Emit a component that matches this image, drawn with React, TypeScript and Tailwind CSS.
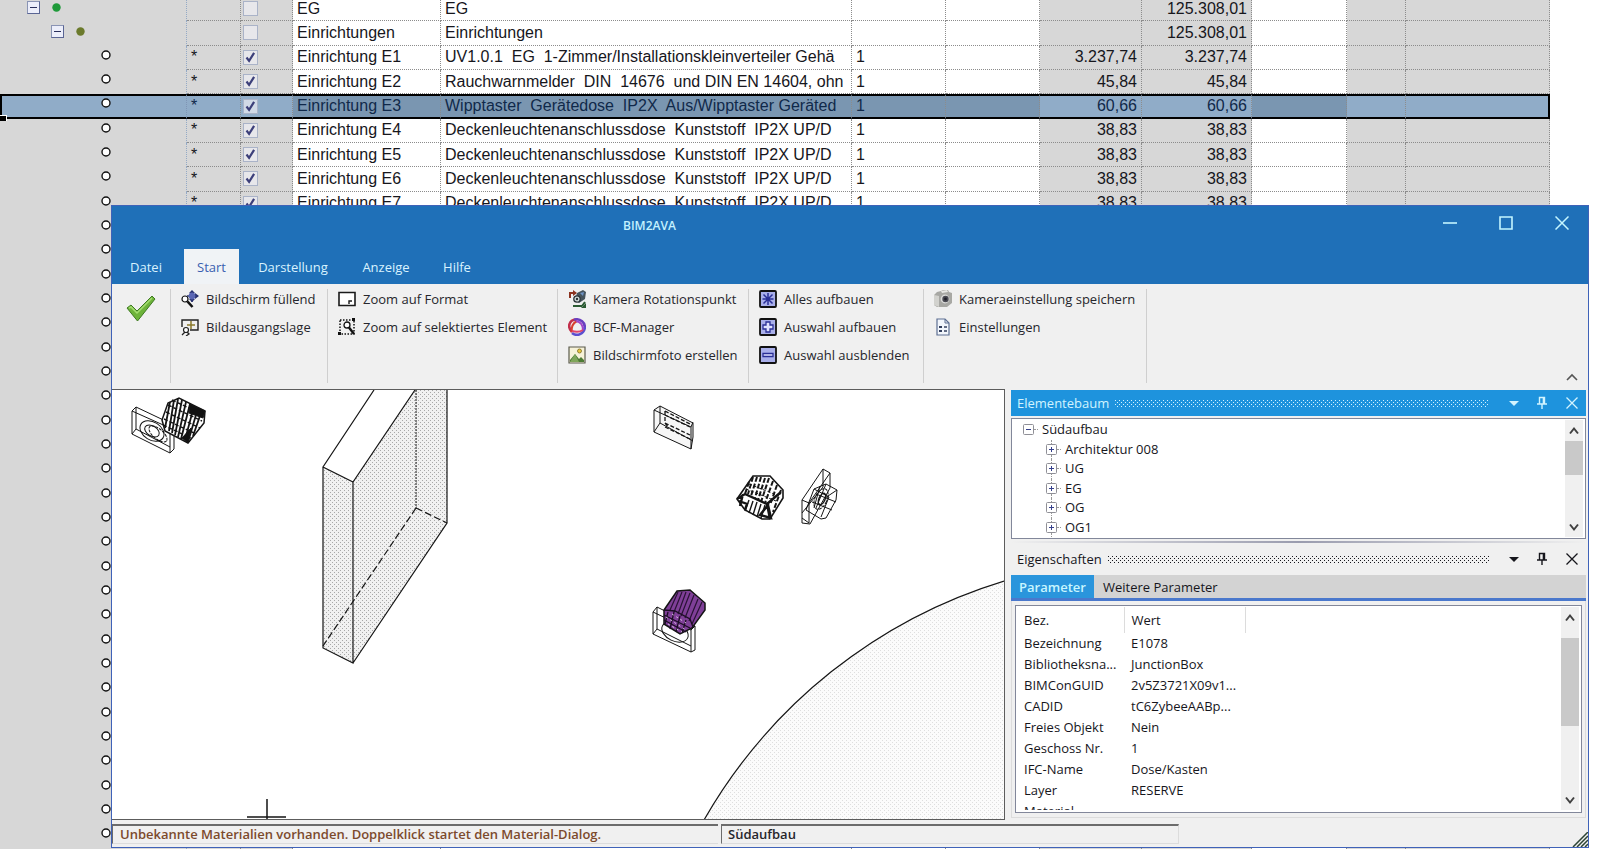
import React from 'react';

type SheetRow = {
  level?: number;
  dot?: string;
  checked?: boolean;
  name: string;
  text: string;
  qty?: string;
  price?: string;
  total?: string;
  selected?: boolean;
};

const DOSE = 'Deckenleuchtenanschlussdose  Kunststoff  IP2X UP/D';

const sheetRows: SheetRow[] = [
  { level: 1, dot: '#1f9a3a', name: 'EG', text: 'EG', total: '125.308,01' },
  {
    level: 2,
    dot: '#6b7a2c',
    name: 'Einrichtungen',
    text: 'Einrichtungen',
    total: '125.308,01',
  },
  {
    checked: true,
    name: 'Einrichtung E1',
    text: 'UV1.0.1  EG  1-Zimmer/Installationskleinverteiler Gehä',
    qty: '1',
    price: '3.237,74',
    total: '3.237,74',
  },
  {
    checked: true,
    name: 'Einrichtung E2',
    text: 'Rauchwarnmelder  DIN  14676  und DIN EN 14604, ohn',
    qty: '1',
    price: '45,84',
    total: '45,84',
  },
  {
    checked: true,
    selected: true,
    name: 'Einrichtung E3',
    text: 'Wipptaster  Gerätedose  IP2X  Aus/Wipptaster Geräted',
    qty: '1',
    price: '60,66',
    total: '60,66',
  },
  ...['E4', 'E5', 'E6', 'E7'].map((id) => ({
    checked: true,
    name: `Einrichtung ${id}`,
    text: DOSE,
    qty: '1',
    price: '38,83',
    total: '38,83',
  })),
];

const hiddenRows = Array.from({ length: 26 }, (_, i) => i);

function TreeCell({ row }: { row?: SheetRow }) {
  if (row?.level) {
    return (
      <div
        className={
          row.level === 1
            ? 'flex items-center gap-3 pl-[27px]'
            : 'flex items-center gap-3 pl-[51px]'
        }
      >
        <button
          aria-label="Zuklappen"
          className="flex h-[13px] w-[13px] items-center justify-center border border-[#8a94b4] border-r-[#5a6594] border-b-[#5a6594] bg-[#eceefa]"
        >
          <span className="h-px w-[7px] bg-[#2a2f5c]" />
        </button>
        <svg className="h-[9px] w-[9px]" viewBox="0 0 9 9">
          <circle cx="4.5" cy="4.5" r="4.2" fill={row.dot} />
        </svg>
      </div>
    );
  }
  return (
    <svg
      className={
        row?.selected
          ? 'ml-[99px] h-[10px] w-[10px]'
          : 'ml-[101px] h-[10px] w-[10px]'
      }
      viewBox="0 0 10 10"
    >
      <circle cx="5" cy="5" r="4" fill="#fff" stroke="#111" strokeWidth="1.4" />
    </svg>
  );
}

function CheckCell({ row }: { row: SheetRow }) {
  return (
    <label className="ml-[2px] grid h-[15px] w-[15px]">
      <input
        type="checkbox"
        aria-label={row.name}
        defaultChecked={row.checked}
        className="col-start-1 row-start-1 h-[15px] w-[15px] appearance-none border border-[#aab3c8] bg-[#eeeef4]/70"
      />
      {row.checked && (
        <svg
          className="pointer-events-none col-start-1 row-start-1"
          viewBox="0 0 15 15"
          fill="none"
        >
          <path d="M3.5 7.5l2.6 3.4 5-8" stroke="#3c3f7a" strokeWidth="2.2" />
        </svg>
      )}
    </label>
  );
}

function Sheet() {
  const line = 'border-r border-dotted border-[#8c8c8c] p-0 ';
  return (
    <div className="h-full overflow-hidden">
      <table className="-mt-[3px] h-full w-full table-fixed border-separate border-spacing-0 font-['Liberation_Sans',Arial,sans-serif] text-base leading-5 text-[#16161c]">
        <colgroup>
          <col className="w-[187px]" />
          <col className="w-[54px]" />
          <col className="w-[52px]" />
          <col className="w-[148px]" />
          <col className="w-[411px]" />
          <col className="w-[94px]" />
          <col className="w-[94px]" />
          <col className="w-[102px]" />
          <col className="w-[110px]" />
          <col className="w-[95px]" />
          <col className="w-[59px]" />
          <col className="w-[144px]" />
          <col />
        </colgroup>
        <tbody>
          {sheetRows.map((row) => {
            const edge = row.selected
              ? 'border-y-2 [border-top-style:solid] [border-bottom-style:solid] border-t-black border-b-black text-[#10294a] '
              : 'border-b ';
            const grey = row.selected ? 'bg-[#90acc8] ' : 'bg-[#d7d7d7] ';
            const white = row.selected ? 'bg-[#7a96b1] ' : 'bg-white ';
            return (
              <tr key={row.name} className="h-6">
                <td
                  className={
                    row.selected
                      ? 'relative border-2 border-r border-black border-r-[#7f95b5] bg-[#90acc8] p-0 pt-[2px] align-top [border-right-style:dotted]'
                      : 'border-r border-dotted border-[#93a9c6] bg-[#d7d7d7] p-0 pt-1 align-top'
                  }
                >
                  <TreeCell row={row} />
                  {row.selected && (
                    <span className="absolute -bottom-1 -left-[2px] h-[6px] w-[7px] border-t border-r border-white bg-black" />
                  )}
                </td>
                <td className={line + edge + grey + 'pl-1'}>{row.qty && '*'}</td>
                <td className={line + edge + grey}>
                  <CheckCell row={row} />
                </td>
                <td className={line + edge + white + 'pl-1'}>{row.name}</td>
                <td
                  className={
                    line + edge + white + 'overflow-hidden pl-1 whitespace-pre'
                  }
                >
                  {row.text}
                </td>
                <td className={line + edge + white + 'pl-1'}>{row.qty}</td>
                <td className={line + edge + white} />
                <td className={line + edge + grey + 'pr-1 text-right'}>
                  {row.price}
                </td>
                <td className={line + edge + grey + 'pr-1 text-right'}>
                  {row.total}
                </td>
                <td className={line + edge + white} />
                <td className={line + edge + grey} />
                <td
                  className={
                    line +
                    edge +
                    grey +
                    (row.selected
                      ? 'border-r-2 border-r-black [border-right-style:solid]'
                      : '')
                  }
                />
                <td className="bg-white p-0" />
              </tr>
            );
          })}
          {hiddenRows.map((i) => (
            <tr key={i} className="h-6">
              <td className="border-r border-dotted border-[#93a9c6] bg-[#d7d7d7] p-0 pt-1 align-top">
                <TreeCell />
              </td>
              <td className={line + 'bg-[#d7d7d7]'} />
              <td className={line + 'bg-[#d7d7d7]'} />
              <td className={line + 'bg-white'} />
              <td className={line + 'bg-white'} />
              <td className={line + 'bg-white'} />
              <td className={line + 'bg-white'} />
              <td className={line + 'bg-[#d7d7d7]'} />
              <td className={line + 'bg-[#d7d7d7]'} />
              <td className={line + 'bg-white'} />
              <td className={line + 'bg-[#d7d7d7]'} />
              <td className={line + 'bg-[#d7d7d7]'} />
              <td className="bg-white p-0" />
            </tr>
          ))}
        </tbody>
      </table>
    </div>
  );
}

function TitleBar() {
  const tab = 'h-[35px] text-[13px] leading-4 font-medium text-[#d9f3ff] ';
  return (
    <header className="bg-[#1f70b8]">
      <div className="flex h-[43px] items-start">
        <h1 className="flex-1 pt-3 pl-[511px] text-xs leading-4 font-semibold text-[#c4f2ff]">
          BIM2AVA
        </h1>
        <div className="flex gap-[42px] pt-[10px] pr-[19px]">
          <button aria-label="Minimieren">
            <svg className="h-[14px] w-[14px]" viewBox="0 0 14 14">
              <path d="M0 7h14" stroke="#c4f6ff" strokeWidth="1.6" />
            </svg>
          </button>
          <button aria-label="Maximieren">
            <svg className="h-[14px] w-[14px]" viewBox="0 0 14 14" fill="none">
              <path d="M1 1h12v12H1z" stroke="#c4f6ff" strokeWidth="1.6" />
            </svg>
          </button>
          <button aria-label="Schließen">
            <svg className="h-[14px] w-[14px]" viewBox="0 0 14 14">
              <path
                d="M.5.5l13 13M13.5.5l-13 13"
                stroke="#c4f6ff"
                strokeWidth="1.5"
              />
            </svg>
          </button>
        </div>
      </div>
      <nav className="flex">
        <button className={tab + 'w-[72px] pr-1'}>Datei</button>
        <button className="h-[35px] w-[55px] bg-[#f0f3f6] text-[13px] leading-4 font-medium text-[#3a5fb0]">
          Start
        </button>
        <button className={tab + 'w-[108px]'}>Darstellung</button>
        <button className={tab + 'w-[78px]'}>Anzeige</button>
        <button className={tab + 'w-[64px]'}>Hilfe</button>
      </nav>
    </header>
  );
}

const icons = {
  fit: (
    <g fill="none">
      <path d="M11 1v11M6 6h11" stroke="#27306e" strokeWidth="1.6" />
      <path d="M8 3l3-3 3 3zM14 3l4 3-4 3zM8 9l3 3 3-3z" fill="#27306e" />
      <circle cx="11" cy="6" r="3.4" fill="#5a66b4" />
      <circle cx="4" cy="9" r="3" fill="#fff" stroke="#111" strokeWidth="1.2" />
      <path d="M6.5 11.5l5 5.500" stroke="#111" strokeWidth="2.6" />
    </g>
  ),
  home: (
    <g fill="none">
      <path d="M1 9V2h16v10H9" stroke="#222" strokeWidth="1.4" />
      <path d="M10 3v8M6 7h8" stroke="#8a7a2c" strokeWidth="1.5" />
      <circle cx="5" cy="12" r="2.5" fill="#fff" stroke="#222" strokeWidth="1.2" />
      <path d="M1 17l3-3M6 14l2 2-3 2" stroke="#222" strokeWidth="1.3" />
    </g>
  ),
  format: (
    <g fill="none">
      <path d="M1 2.5h16v13H1z" fill="#fff" stroke="#1a1a1a" strokeWidth="1.6" />
      <path d="M11 14v-3h3" stroke="#1a1a1a" strokeWidth="1.4" />
    </g>
  ),
  selection: (
    <g fill="none">
      <path
        d="M2 2h14v14H2z"
        stroke="#111"
        strokeWidth="1.5"
        strokeDasharray="1.5 1.5"
      />
      <path d="M0 14h3v3H0zM14 0h3v3h-3z" fill="#111" />
      <circle cx="9" cy="7" r="3" fill="#fff" stroke="#111" strokeWidth="1.3" />
      <path d="M11 9.5l5 6.5" stroke="#111" strokeWidth="2.4" />
    </g>
  ),
  rotate: (
    <g fill="none">
      <path d="M2 8V3h4" stroke="#8c3320" strokeWidth="2" />
      <path d="M5 0l4 3-4 3z" fill="#8c3320" />
      <path d="M9 3l6-3 3 2-1 7-6 4-4-3z" fill="#46545c" />
      <path d="M12 3l4-1-1 4z" fill="#6f93c4" />
      <circle
        cx="9"
        cy="9"
        r="3.2"
        fill="#cfdad8"
        stroke="#2c3438"
        strokeWidth="1.3"
      />
      <circle cx="9" cy="9" r="1.2" fill="#2c3438" />
      <path d="M5 16h9M14 16l3-4" stroke="#2b5b33" strokeWidth="2" />
      <path d="M13 18h5v-5z" fill="#2b5b33" />
    </g>
  ),
  bcf: (
    <g fill="none" strokeWidth="2.6">
      <path d="M4 14C-1 9 1 2 8 1.500" stroke="#c22f4c" />
      <path d="M6 1.800c6-2 12 3 10.500 9" stroke="#6a3fc0" />
      <path d="M17 9c-1 7-8 10-13 6" stroke="#5b4fd0" />
      <path d="M4 14c-1-6 1-9 5-11" stroke="#d8402f" strokeWidth="2" />
      <path d="M8 3c5 1 7 4 7 9" stroke="#a046c8" strokeWidth="2" />
      <path d="M4 13c4 1 8 1 11-1" stroke="#e0456c" strokeWidth="2" />
    </g>
  ),
  photo: (
    <g fill="none">
      <path d="M1 1h16v16H1z" fill="#f6f2d8" stroke="#5b5b4c" strokeWidth="1.2" />
      <path d="M2 14l5-6 4 5 2-2 3 3v2H2z" fill="#4c7a34" />
      <path d="M7 8l4 8H2z" fill="#7fa65a" />
      <circle
        cx="11.5"
        cy="5"
        r="2"
        fill="#e8c93c"
        stroke="#7c6b22"
        strokeWidth=".8"
      />
    </g>
  ),
  all: (
    <g fill="none">
      <rect
        x="1"
        y="1"
        width="16"
        height="16"
        rx="1"
        fill="#a9afea"
        stroke="#111"
        strokeWidth="1.8"
      />
      <path
        d="M9 3v12M3.500 9h11M4.500 4.500l9 9M13.500 4.500l-9 9"
        stroke="#2a2f96"
        strokeWidth="1.5"
      />
    </g>
  ),
  plus: (
    <g fill="none">
      <rect
        x="1"
        y="1"
        width="16"
        height="16"
        rx="1"
        fill="#a9afea"
        stroke="#111"
        strokeWidth="1.8"
      />
      <path
        d="M7 4h4v3h3v4h-3v3H7v-3H4V7h3z"
        fill="#dfe2ff"
        stroke="#2a2f96"
        strokeWidth="1.3"
      />
    </g>
  ),
  minus: (
    <g fill="none">
      <rect
        x="1"
        y="1"
        width="16"
        height="16"
        rx="1"
        fill="#a9afea"
        stroke="#111"
        strokeWidth="1.8"
      />
      <path
        d="M4 7.500h10v3H4z"
        fill="#dfe2ff"
        stroke="#2a2f96"
        strokeWidth="1.3"
      />
    </g>
  ),
  camera: (
    <g>
      <path d="M0 5l3-3 4-1 2-1 5 0 1 2 3 1v10l-5 4-10 0-3-2z" fill="#a8a8a4" />
      <path d="M0 5l5 1v11l-5-2z" fill="#d2d2ce" />
      <path d="M7 1l6-1 1 2-6 1z" fill="#e8e8e4" />
      <circle cx="11" cy="9" r="4.4" fill="#dcdcda" />
      <circle cx="11.5" cy="9" r="3.2" fill="#4a4a52" />
      <circle cx="11.5" cy="9" r="1.4" fill="#20202a" />
    </g>
  ),
  settings: (
    <g fill="none">
      <path d="M3 1h8l4 4v12H3z" fill="#f2f6fc" stroke="#5d6f92" strokeWidth="1.2" />
      <path d="M11 1v4h4" stroke="#5d6f92" />
      <path d="M5 8h3v2H5zM5 12h3v2H5z" fill="#34405e" />
      <path d="M10 9h3M10 13h3" stroke="#34405e" strokeWidth="1.6" />
    </g>
  ),
};

type RibbonItem = { icon: keyof typeof icons; label: string };

const ribbonGroups: { width: string; items: RibbonItem[] }[] = [
  {
    width: 'w-[157px]',
    items: [
      { icon: 'fit', label: 'Bildschirm füllend' },
      { icon: 'home', label: 'Bildausgangslage' },
    ],
  },
  {
    width: 'w-[230px]',
    items: [
      { icon: 'format', label: 'Zoom auf Format' },
      { icon: 'selection', label: 'Zoom auf selektiertes Element' },
    ],
  },
  {
    width: 'w-[191px]',
    items: [
      { icon: 'rotate', label: 'Kamera Rotationspunkt' },
      { icon: 'bcf', label: 'BCF-Manager' },
      { icon: 'photo', label: 'Bildschirmfoto erstellen' },
    ],
  },
  {
    width: 'w-[175px]',
    items: [
      { icon: 'all', label: 'Alles aufbauen' },
      { icon: 'plus', label: 'Auswahl aufbauen' },
      { icon: 'minus', label: 'Auswahl ausblenden' },
    ],
  },
  {
    width: 'w-[223px]',
    items: [
      { icon: 'camera', label: 'Kameraeinstellung speichern' },
      { icon: 'settings', label: 'Einstellungen' },
    ],
  },
];

function Ribbon() {
  return (
    <div className="flex h-[105px] shrink-0 bg-[#f0f0f0] pt-[5px] pb-[6px]">
      <div className="w-[59px] border-r border-[#cfcfcf] pt-[6px] pl-[14px]">
        <button aria-label="Übernehmen">
          <svg className="h-7 w-[30px]" viewBox="0 0 30 28">
            <path
              d="M1 13l4-3 6 6L26 1l3 3-17.500 22z"
              fill="#6db33a"
              stroke="#3e7a22"
              strokeWidth="1"
            />
            <path
              d="M3 13l2-1 6 6L26 3"
              fill="none"
              stroke="#a4dc70"
              strokeWidth="1.5"
            />
          </svg>
        </button>
      </div>
      {ribbonGroups.map((group, i) => (
        <div
          key={i}
          className={
            group.width + ' flex flex-col gap-2 border-r border-[#cfcfcf] pl-[10px]'
          }
        >
          {group.items.map((item) => (
            <button
              key={item.label}
              className="flex h-5 items-center gap-[7px] text-[13px] leading-5 font-medium whitespace-nowrap text-[#26262c]"
            >
              <svg className="h-[18px] w-[18px] shrink-0" viewBox="0 0 18 18">
                {icons[item.icon]}
              </svg>
              {item.label}
            </button>
          ))}
        </div>
      ))}
      <button aria-label="Menüband einklappen" className="mt-auto mr-[10px] ml-auto">
        <svg className="h-[11px] w-3" viewBox="0 0 12 11" fill="none">
          <path d="M1 8l5-5 5 5" stroke="#555" strokeWidth="1.6" />
        </svg>
      </button>
    </div>
  );
}

function Viewport() {
  return (
    <div className="min-w-0 flex-1 border-t border-r border-b border-[#5c5c5c] bg-white">
      <svg className="h-full w-full" fill="none" stroke="#151515">
        <defs>
          <pattern id="dots" width="4" height="4" patternUnits="userSpaceOnUse">
            <path d="M0 0h1v1H0zM2 2h1v1H2z" fill="#a8a8a8" stroke="none" />
          </pattern>
          <pattern id="fine" width="4" height="4" patternUnits="userSpaceOnUse">
            <path d="M0 0h1v1H0zM2 2h1v1H2z" fill="#dedede" stroke="none" />
          </pattern>
        </defs>

        {/* wall slab */}
        <path
          d="M211 77l30 15L303 0h32v133L241 273l-30-15z"
          fill="#f1f1f1"
          stroke="none"
        />
        <path
          d="M211 77l30 15L303 0h32v133L241 273l-30-15z"
          fill="url(#dots)"
          stroke="none"
        />
        <path
          d="M262 0L211 77l30 15L303 0M211 77v181l30 15V92M335 0v133L241 273"
          strokeWidth="1.2"
        />
        <path d="M304 0v118" strokeDasharray="2 1" />
        <path
          d="M304 118l31 15M304 118l-93 138"
          strokeWidth="1.2"
          strokeDasharray="7 3"
        />

        {/* round slab */}
        <path
          d="M592 430A520 520 0 0 1 892 191V430z"
          fill="#fbfbfb"
          stroke="none"
        />
        <path
          d="M592 430A520 520 0 0 1 892 191V430z"
          fill="url(#fine)"
          stroke="none"
        />
        <path d="M592 430A520 520 0 0 1 892 191" strokeWidth="1.2" />

        {/* socket, top left */}
        <g>
          <path d="M20 21l4-4 38 18v24l-4 4-38-19zM20 21l38 17v25M58 38l4-3M24 17v22l34 18M24 39l-4 5" />
          <ellipse cx="40" cy="41" rx="13" ry="9" transform="rotate(32 40 41)" />
          <ellipse cx="40" cy="41" rx="8" ry="5" transform="rotate(32 40 41)" />
          <ellipse
            cx="46"
            cy="44"
            rx="11"
            ry="5"
            transform="rotate(40 46 44)"
            strokeDasharray="3 1"
          />
          <path
            d="M50 30l6-17 11-5 26 13-1 12-16 20-23-12z"
            fill="#fff"
            strokeWidth="1.5"
          />
          <path
            d="M58 12l-5 26M62 10l-5 31M66 9l-6 34M70 10l-7 35M74 12l-8 35M78 14l-9 35M82 16l-9 34M86 18l-10 34M90 20l-9 26"
            strokeWidth="1.8"
          />
          <path
            d="M56 15l34 16M54 22l34 16M52 29l30 14M51 35l28 13M60 10l32 15"
            strokeWidth="1.4"
            strokeDasharray="4 2"
          />
          <path d="M78 14l15 7-2 7-14-5zM70 48l9-10-3 15z" fill="#111" />
        </g>

        {/* switch plate, top */}
        <g>
          <path d="M542 20l6-4 33 17v14l-2 12-37-17z" fill="#f6f6f6" />
          <path d="M542 20l37 17v22M579 37l2-5M548 16v17l33 18M548 33l-6 9" />
          <path
            d="M553 21l25 13M553 25l25 12M553 33l25 12M553 37l25 12M553 21v12l4 5"
            strokeWidth="1.3"
            strokeDasharray="4 2"
          />
        </g>

        {/* junction box, right */}
        <g>
          <path
            d="M625 109l16-23h17l13 14v8l-13 21h-8l-17-9z"
            fill="#fff"
            strokeWidth="1.6"
          />
          <path
            d="M625 109l8-5 22 10 14-12M627 111l8 3-2 6M655 114l3 15M631 104l-3 12M648 125l8-10 3 13z"
            strokeWidth="2.4"
          />
          <path
            d="M637 110l-4 11M641 111l-4 12M645 112l-4 13M649 114l-4 13M653 115l-4 13"
            strokeWidth="1.4"
          />
          <path
            d="M637 92l-4 12M641 87l-5 17M645 87l-6 19M649 87l-6 21M653 88l-7 22M657 88l-8 24M661 91l-8 22M665 95l-7 20M669 100l-8 22"
            strokeWidth="2"
            strokeDasharray="5 2"
          />
          <path d="M637 94l30 12M634 99l30 12" strokeDasharray="3 2" />
        </g>

        {/* socket, seen from the side */}
        <g>
          <path d="M690 110l21-31 7 4v15l-20 36-8-1z" />
          <path d="M690 110l7 3v20M697 113l21-30M711 79v18l-21 26M690 128l7 5" />
          <path d="M702 99l12-5 11 6-1 10-10 18-5 1-15-9zM702 99l15 8-8 20M714 94l-10 24M725 100l-12 8M708 96l-6 22M724 112l-20-8M720 120l-20-8" />
          <ellipse
            cx="709"
            cy="109"
            rx="6"
            ry="11"
            transform="rotate(24 709 109)"
            strokeDasharray="3 1"
          />
          <ellipse
            cx="710"
            cy="109"
            rx="3"
            ry="6"
            transform="rotate(24 710 109)"
            strokeWidth="1.5"
          />
        </g>

        {/* selected junction box */}
        <g>
          <path d="M541 222l4-5 38 19v24l-4 2-38-18zM541 222l38 18v22M579 240l4-4M545 217v22l34 17M545 239l-4 5" />
          <ellipse cx="563" cy="242" rx="14" ry="9" transform="rotate(26 563 242)" />
          <path
            d="M552 220l13-19 13-1 15 13v7l-13 18-12 6-16-10z"
            fill="#7f3f98"
            strokeWidth="1.5"
          />
          <path
            d="M566 202l-8 18M570 202l-8 20M574 202l-8 22M578 203l-9 23M582 205l-9 23M586 209l-9 22M590 212l-10 22"
            stroke="#2a1236"
            strokeWidth="1.2"
          />
          <path
            d="M552 220l11 1 15 8 3 8M552 225l26 13M552 230l22 12M556 222l-3 12M562 222l-4 17M568 226l-4 16M574 230l-4 13"
            stroke="#1c0e24"
            strokeWidth="1.3"
          />
          <path
            d="M554 227l20 13M556 234l14 8M560 224l14 9"
            stroke="#d9c4e4"
            strokeDasharray="2 3"
          />
        </g>

        {/* origin cross */}
        <path d="M155 409v21M135 427h39" strokeWidth="1.5" />
      </svg>
    </div>
  );
}

function PanelHeader({ title, active }: { title: string; active?: boolean }) {
  return (
    <div
      className={
        active
          ? 'flex h-[26px] items-center bg-[#1e93dd] pr-2 pl-[6px] text-[#d2f4ff]'
          : 'flex h-8 items-center bg-[#f0f0f0] pr-2 pl-[6px] text-[#16161c]'
      }
    >
      <h2 className="pr-[6px] text-[13px] leading-5">{title}</h2>
      <div className="h-[7px] flex-1 [background-image:radial-gradient(circle_at_0.5px_0.5px,currentColor_0.7px,transparent_0.8px),radial-gradient(circle_at_0.5px_0.5px,currentColor_0.7px,transparent_0.8px)] [background-position:0_0,2px_2px] [background-size:4px_4px]" />
      <button aria-label="Menü" className="ml-[19px]">
        <svg className="h-3 w-3" viewBox="0 0 12 12" fill="currentColor">
          <path d="M1 4h10L6 9z" />
        </svg>
      </button>
      <button aria-label="Anheften" className="ml-4">
        <svg
          className="h-[14px] w-3"
          viewBox="0 0 12 14"
          fill="none"
          stroke="currentColor"
        >
          <path d="M3.500 8V1.500h5V8M1 8h10M6 8v5" strokeWidth="1.4" />
          <path d="M7.500 2v6" strokeWidth="1.6" />
        </svg>
      </button>
      <button aria-label="Schließen" className="ml-[18px]">
        <svg className="h-3 w-3" viewBox="0 0 12 12" stroke="currentColor">
          <path d="M.5.5l11 11M11.500.5l-11 11" strokeWidth="1.3" />
        </svg>
      </button>
    </div>
  );
}

function ScrollBar({ thumb }: { thumb: string }) {
  return (
    <div className="flex w-[18px] shrink-0 flex-col items-center bg-[#f0f0f0]">
      <button aria-label="Nach oben" className="h-[21px]">
        <svg className="h-[10px] w-[10px]" viewBox="0 0 10 10" fill="none">
          <path d="M1 7.500l4-5 4 5" stroke="#404040" strokeWidth="2" />
        </svg>
      </button>
      <div className={thumb + ' w-full bg-[#c9c9c9]'} />
      <button aria-label="Nach unten" className="mt-auto h-5">
        <svg className="h-[10px] w-[10px]" viewBox="0 0 10 10" fill="none">
          <path d="M1 2.500l4 5 4-5" stroke="#404040" strokeWidth="2" />
        </svg>
      </button>
    </div>
  );
}

function Toggle({ open }: { open?: boolean }) {
  return (
    <button aria-label={open ? 'Zuklappen' : 'Aufklappen'}>
      <svg className="h-[11px] w-[11px]" viewBox="0 0 11 11" fill="none">
        <rect
          x=".5"
          y=".5"
          width="10"
          height="10"
          rx="1"
          fill="#fff"
          stroke="#8f8f96"
        />
        <path d={open ? 'M3 5.500h5' : 'M3 5.500h5M5.500 3v5'} stroke="#35408c" />
      </svg>
    </button>
  );
}

const treeNodes = ['Architektur 008', 'UG', 'EG', 'OG', 'OG1'];

function ElementTree() {
  return (
    <section>
      <PanelHeader title="Elementebaum" active />
      <div className="mt-[2px] flex h-[121px] border border-[#82879a] bg-white py-px pr-[2px]">
        <ul className="flex flex-1 flex-col pl-[11px] text-[13px] text-[#16161c]">
          <li className="flex flex-1 items-center">
            <Toggle open />
            <span className="mr-1 w-1 border-t border-dotted border-[#999]" />
            Südaufbau
          </li>
          {treeNodes.map((node) => (
            <li key={node} className="flex flex-1 items-center pl-[23px]">
              <span className="flex flex-col items-center self-stretch">
                <span className="flex-1 border-l border-dotted border-[#999]" />
                <Toggle />
                <span className="flex-1 border-l border-dotted border-[#999]" />
              </span>
              <span className="mr-1 w-1 border-t border-dotted border-[#999]" />
              {node}
            </li>
          ))}
        </ul>
        <ScrollBar thumb="h-[34px]" />
      </div>
    </section>
  );
}

const properties = [
  ['Bezeichnung', 'E1078'],
  ['Bibliotheksna...', 'JunctionBox'],
  ['BIMConGUID', '2v5Z3721X09v1...'],
  ['CADID', 'tC6ZybeeAABp...'],
  ['Freies Objekt', 'Nein'],
  ['Geschoss Nr.', '1'],
  ['IFC-Name', 'Dose/Kasten'],
  ['Layer', 'RESERVE'],
  ['Material', ''],
];

function Properties() {
  return (
    <section className="flex min-h-0 flex-1 flex-col">
      <PanelHeader title="Eigenschaften" />
      <div className="flex h-[23px] items-stretch bg-[#d3d3d3] text-[13px] leading-5">
        <button className="w-[83px] bg-[#2a95dc] font-semibold text-[#c8f6ff]">
          Parameter
        </button>
        <button className="px-[9px] text-[#16161c]">Weitere Parameter</button>
      </div>
      <div className="h-[3px] bg-[#4a78cc]" />
      <div className="flex min-h-0 flex-1 flex-col border border-t-0 border-[#dcdcdc] px-[3px] pt-1 pb-1">
        <div className="flex min-h-0 flex-1 border border-[#82879a] bg-white pt-px pr-[2px] pb-[2px]">
          <div className="flex-1 overflow-hidden">
            <table className="text-[13px] leading-5 text-[#16161c]">
              <thead>
                <tr className="text-left">
                  <th className="h-[26px] w-[108px] border-r border-[#dcdcdc] p-0 pl-2 font-normal">
                    Bez.
                  </th>
                  <th className="w-[121px] border-r border-[#dcdcdc] p-0 pl-[7px] font-normal">
                    Wert
                  </th>
                </tr>
              </thead>
              <tbody>
                {properties.map(([name, value]) => (
                  <tr key={name}>
                    <td className="p-0 pl-2 leading-[21px]">{name}</td>
                    <td className="p-0 pl-[7px] leading-[21px]">{value}</td>
                  </tr>
                ))}
              </tbody>
            </table>
          </div>
          <ScrollBar thumb="mt-[10px] h-[88px]" />
        </div>
      </div>
    </section>
  );
}

function StatusBar() {
  const cell =
    'h-5 border-t-2 border-b border-[#6c6c6c] border-b-[#dcdcdc] text-[13px] leading-[17px] whitespace-nowrap ';
  return (
    <footer className="flex h-[27px] shrink-0 items-start bg-[#f0f0f0] pt-1">
      <div
        className={
          cell + 'w-[606px] border-l pl-[7px] font-semibold text-[#7c4a2c]'
        }
      >
        Unbekannte Materialien vorhanden. Doppelklick startet den Material-Dialog.
      </div>
      <div
        className={
          cell +
          'ml-[3px] w-[458px] border-r border-l border-r-[#dcdcdc] pl-[6px] font-semibold text-[#26262c]'
        }
      >
        Südaufbau
      </div>
      <svg className="ml-auto h-[15px] w-4 self-end" viewBox="0 0 16 15">
        <path
          d="M1 15L16 0M5 15L16 4M9 15l7-7M13 15l3-3"
          stroke="#2c4434"
          strokeWidth="1.5"
        />
      </svg>
    </footer>
  );
}

export default function App() {
  return (
    <main className="relative h-screen overflow-hidden bg-white">
      <Sheet />
      <div className="absolute top-[205px] right-[11px] bottom-1 left-[111px] flex flex-col border border-[#3f62b8] bg-[#f0f0f0] font-['Open_Sans','Noto_Sans',sans-serif]">
        <TitleBar />
        <Ribbon />
        <div className="flex min-h-0 flex-1">
          <Viewport />
          <aside className="ml-[6px] flex w-[577px] flex-col pt-px pr-[2px] pb-[2px]">
            <ElementTree />
            <div className="mt-[2px] h-[2px] bg-linear-to-r from-[#f0f0f0] via-[#9a9cae] to-[#f0f0f0]" />
            <Properties />
          </aside>
        </div>
        <StatusBar />
      </div>
    </main>
  );
}
